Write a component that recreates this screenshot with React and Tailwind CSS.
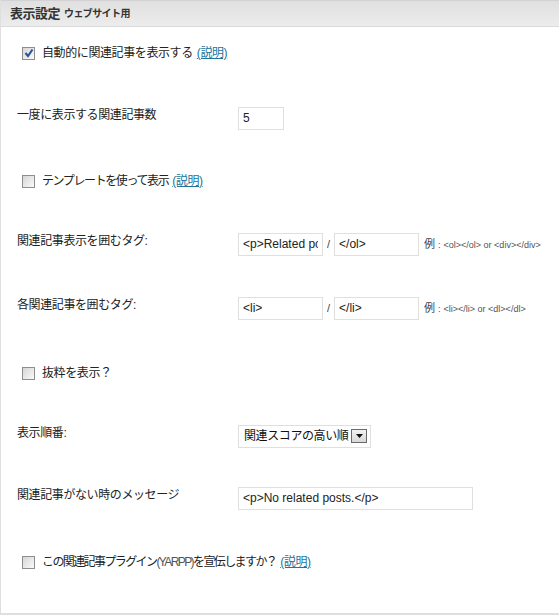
import React from 'react';

const font = "font-['Liberation_Sans','Noto_Sans_CJK_JP',sans-serif]";

const Check = ({ checked }) => (
  <span className="inline-flex h-[13px] w-[13px] shrink-0 items-center justify-center border border-[#8e8e8e] bg-linear-to-br from-[#d6d6d6] to-[#fafafa]">
    {checked && (
      <svg width="10" height="10" viewBox="0 0 10 10">
        <path d="M1.5 5 L4 8 L8.5 1.5" fill="none" stroke="#24519c" strokeWidth="2" />
      </svg>
    )}
  </span>
);

const Help = () => (
  <a href="#" className="ml-[4px] tracking-[-0.4px] text-[#21759b] underline">(説明)</a>
);

const CheckRow = ({ h, checked, track = 'tracking-[-0.4px]', children, help }) => (
  <div className={`flex items-center pl-[21px] ${h}`}>
    <Check checked={checked} />
    <span className="ml-[7px] text-[12px] text-[#222]">
      <span className={track}>{children}</span>
      {help && <Help />}
    </span>
  </div>
);

const Label = ({ children }) => (
  <span className="mb-[6px] w-[221px] shrink-0 text-[12px] tracking-[-0.4px] text-[#222]">{children}</span>
);

const Field = ({ w, value }) => (
  <input
    readOnly
    value={value}
    className={`h-[23px] border border-[#dfdfdf] bg-white px-[4px] text-[12px] text-[#222] outline-none ${w}`}
  />
);

const Example = ({ children }) => (
  <span className="ml-[5px] flex items-baseline text-[#444]">
    <span className="text-[11px]">例</span>
    <span className="mx-[3px] text-[9px]">:</span>
    <span className="text-[9px] text-[#555]">{children}</span>
  </span>
);

export default function App() {
  return (
    <div className={`h-[615px] w-[559px] border-l border-b-2 border-[#dfdfdf] bg-white ${font}`}>
      <div className="flex h-[27px] items-center border-t border-b border-t-[#d2d2d2] border-b-[#dadada] bg-linear-to-b from-[#e0e0e0] to-[#ececec] pl-[9px]">
        <span className="text-[13px] font-bold tracking-[-0.5px] text-[#333]">表示設定</span>
        <span className="ml-[4px] text-[10px] font-bold tracking-[-0.6px] text-[#333]">ウェブサイト用</span>
      </div>

      <CheckRow h="h-[52px]" checked help>
        自動的に関連記事を表示する
      </CheckRow>

      <div className="flex h-[78px] items-center pl-[16px]">
        <Label>一度に表示する関連記事数</Label>
        <Field w="w-[46px]" value="5" />
      </div>

      <CheckRow h="h-[48px]" track="tracking-[-1.4px]" help>
        テンプレートを使って表示
      </CheckRow>

      <div className="flex h-[78px] items-center pl-[16px]">
        <Label>関連記事表示を囲むタグ:</Label>
        <Field w="w-[85px]" value="<p>Related posts:</p><ol>" />
        <span className="mx-[4px] text-[11px] text-[#444]">/</span>
        <Field w="w-[85px]" value="</ol>" />
        <Example>{'<ol></ol> or <div></div>'}</Example>
      </div>

      <div className="flex h-[50px] items-center pl-[16px]">
        <Label>各関連記事を囲むタグ:</Label>
        <Field w="w-[85px]" value="<li>" />
        <span className="mx-[4px] text-[11px] text-[#444]">/</span>
        <Field w="w-[85px]" value="</li>" />
        <Example>{'<li></li> or <dl></dl>'}</Example>
      </div>

      <CheckRow h="h-[80px]">抜粋を表示？</CheckRow>

      <div className="flex h-[46px] items-center pl-[16px]">
        <Label>表示順番:</Label>
        <div className="flex h-[23px] w-[133px] items-center justify-between border border-[#dfdfdf] bg-white pl-[5px] pr-[3px]">
          <span className="text-[12px] tracking-[-0.4px] text-[#111]">関連スコアの高い順</span>
          <span className="flex h-[14px] w-[16px] items-center justify-center border border-[#6b6b6b] bg-linear-to-b from-[#f2f2f2] to-[#d8d8d8]">
            <svg width="7" height="4" viewBox="0 0 7 4">
              <path d="M0 0 H7 L3.5 4 Z" fill="#111" />
            </svg>
          </span>
        </div>
      </div>

      <div className="flex h-[78px] items-center pl-[16px]">
        <Label>関連記事がない時のメッセージ</Label>
        <Field w="w-[235px]" value="<p>No related posts.</p>" />
      </div>

      <CheckRow h="h-[50px]" track="tracking-[-1.6px]" help>
        この関連記事プラグイン<span className="text-[#555]">(YARPP)</span>を宣伝しますか？
      </CheckRow>
    </div>
  );
}
